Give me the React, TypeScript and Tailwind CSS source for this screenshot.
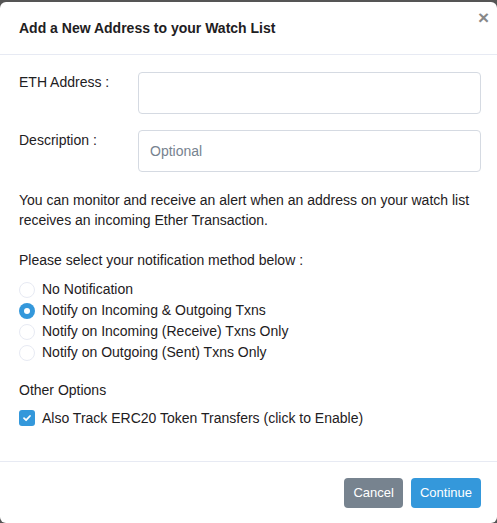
import React from "react";

const Radio = ({ checked, label }: { checked?: boolean; label: string }) => (
  <label className="flex items-center h-[21px]">
    {checked ? (
      <span className="w-4 h-4 rounded-full bg-[#3498db] flex items-center justify-center">
        <span className="w-[6px] h-[6px] rounded-full bg-white" />
      </span>
    ) : (
      <span className="w-4 h-4 rounded-full border border-[#e7eaf3] bg-white" />
    )}
    <span className="ml-[7px]">{label}</span>
  </label>
);

export default function App() {
  return (
    <div className="w-[497px] h-[523px] bg-[#555] pt-[2px]" style={{ fontFamily: '"Liberation Sans", Arial, sans-serif' }}>
      <div className="w-full h-[521px] bg-white rounded-[6px] flex flex-col text-[14px] text-[#1e2022]">
        <div className="relative h-[53px] border-b border-[#e7eaf3] flex items-center px-[19px] pt-[1px]">
          <h5 className="font-bold text-[14px] text-[#1e2022]">Add a New Address to your Watch List</h5>
          <span className="absolute right-[8px] top-[6px] text-[#888] text-[19px] font-bold leading-none">×</span>
        </div>
        <div className="pl-[19px] pr-[16px] pt-[17px] flex-1">
          <div className="flex">
            <div className="w-[119px] pt-0">ETH Address :</div>
            <div className="flex-1 h-[42px] border border-[#d5dae2] rounded-[4px]" />
          </div>
          <div className="flex mt-[16px]">
            <div className="w-[119px] pt-0">Description :</div>
            <div className="flex-1 h-[42px] border border-[#d5dae2] rounded-[4px] flex items-center px-[11px] text-[#77838f]">Optional</div>
          </div>
          <p className="mt-[18px] leading-[20px] pr-[3px]">
            You can monitor and receive an alert when an address on your watch list receives an incoming Ether Transaction.
          </p>
          <p className="mt-[20px] leading-[20px]">Please select your notification method below :</p>
          <div className="mt-[9px] flex flex-col">
            <Radio label="No Notification" />
            <Radio checked label="Notify on Incoming & Outgoing Txns" />
            <Radio label="Notify on Incoming (Receive) Txns Only" />
            <Radio label="Notify on Outgoing (Sent) Txns Only" />
          </div>
          <p className="mt-[17px] leading-[20px]">Other Options</p>
          <label className="mt-[8px] flex items-center h-[20px]">
            <span className="w-4 h-4 rounded-[3px] bg-[#3498db] flex items-center justify-center">
              <svg width="10" height="10" viewBox="0 0 10 10"><path d="M2 5.2 L4.1 7.2 L8 3" stroke="white" strokeWidth="1.8" fill="none" strokeLinecap="round" strokeLinejoin="round" /></svg>
            </span>
            <span className="ml-[7px]">Also Track ERC20 Token Transfers (click to Enable)</span>
          </label>
        </div>
        <div className="h-[61px] border-t border-[#e7eaf3] flex items-center justify-end gap-[8px] px-[16px] mb-[1px] pt-[1px]">
          <button className="h-[30px] px-[9px] rounded-[4px] bg-[#77838f] text-white text-[13px]">Cancel</button>
          <button className="h-[30px] px-[9px] rounded-[4px] bg-[#3498db] text-white text-[13px]">Continue</button>
        </div>
      </div>
    </div>
  );
}
